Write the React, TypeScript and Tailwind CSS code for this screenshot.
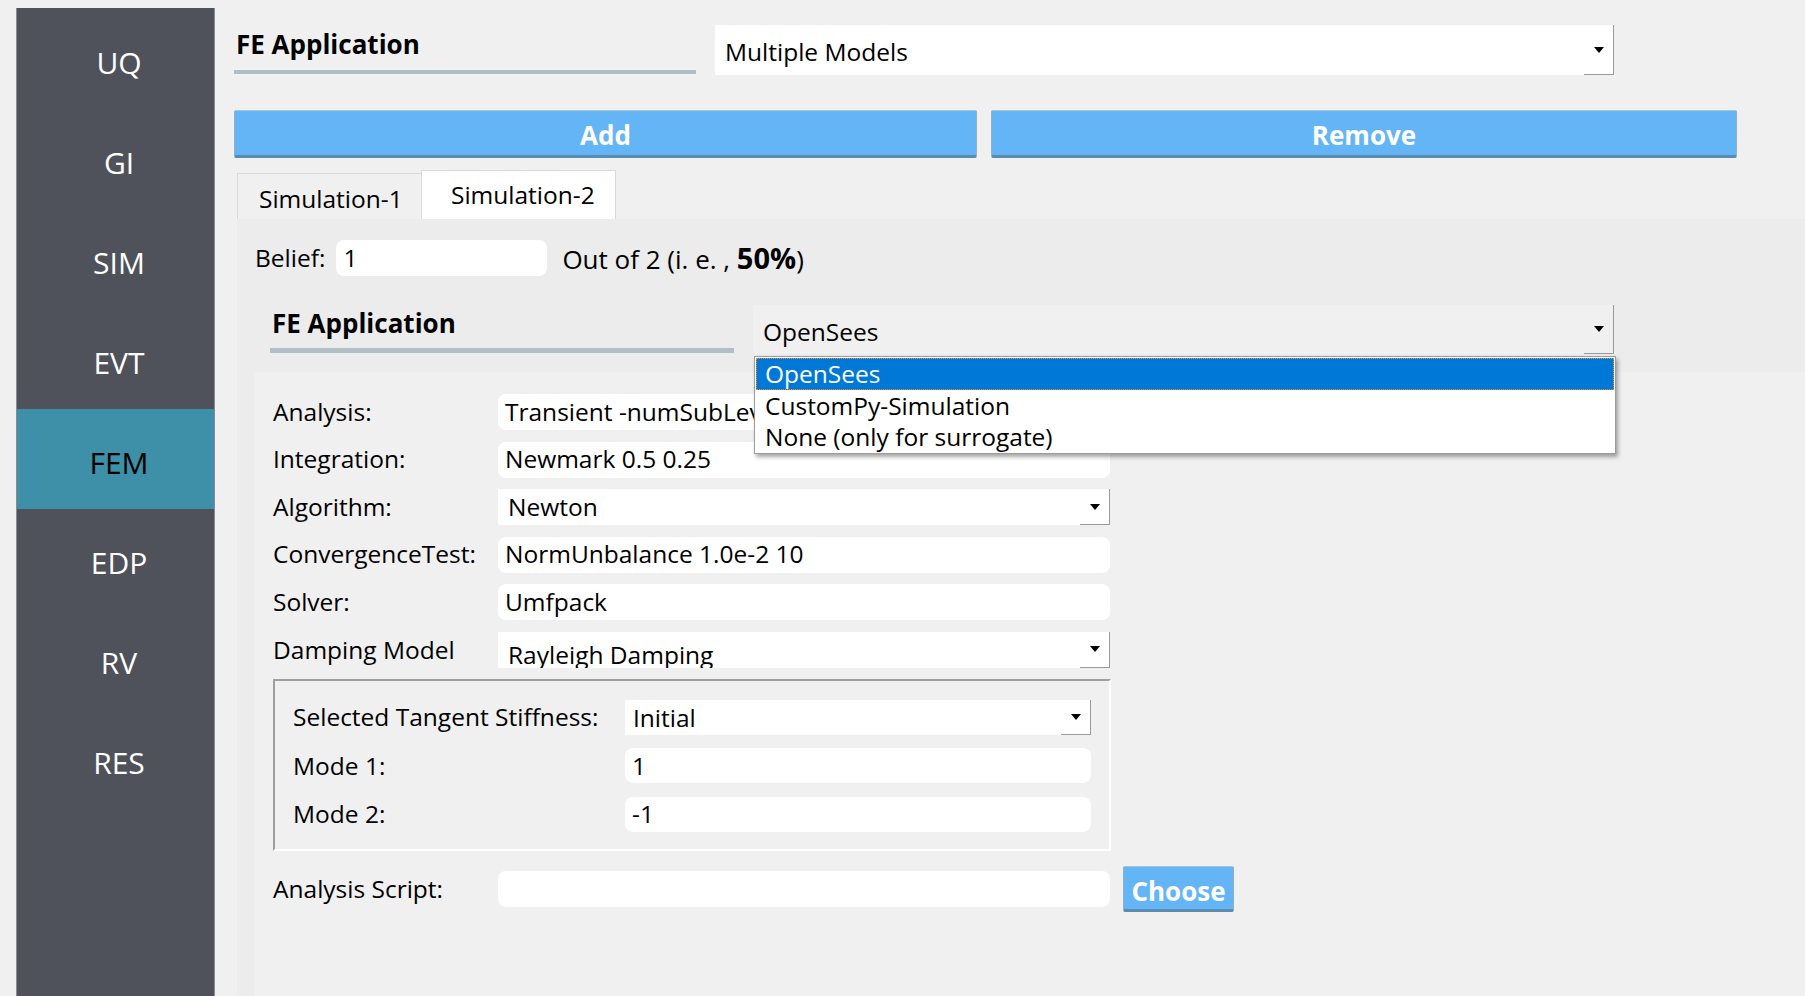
import React from 'react';

const navItems = ['UQ', 'GI', 'SIM', 'EVT', 'FEM', 'EDP', 'RV', 'RES'];

function Arrow() {
  return (
    <svg width="12" height="8" viewBox="0 0 12 8">
      <path d="M1 1 L11 1 L6 7 Z" fill="#000" />
    </svg>
  );
}

function ComboBox({ text, className, textClass }: { text: string; className: string; textClass?: string }) {
  return (
    <div className={`relative overflow-hidden flex items-center ${className}`}>
      <span className={`pl-[10px] whitespace-nowrap ${textClass ?? ''}`}>{text}</span>
      <div className="absolute right-0 top-0 bottom-0 w-[30px] border-r border-b border-[#9a9a9a] flex items-center justify-center">
        <Arrow />
      </div>
    </div>
  );
}

function TextInput({ value, className }: { value: string; className: string }) {
  return (
    <div className={`bg-white rounded-[8px] flex items-center overflow-hidden ${className}`}>
      <span className="pl-[7px] whitespace-nowrap">{value}</span>
    </div>
  );
}

function SectionLabel({ text, className, barClass }: { text: string; className: string; barClass: string }) {
  return (
    <div className={`flex flex-col ${className}`}>
      <div className="font-bold text-[26px] leading-[32px] pl-[2px]">{text}</div>
      <div className={`bg-[#b0bec5] ${barClass}`} />
    </div>
  );
}

function FormRow({ label, children }: { label: string; children: React.ReactNode }) {
  return (
    <div className="flex items-center h-[36px]">
      <div className="w-[225px] whitespace-nowrap">{label}</div>
      {children}
    </div>
  );
}

const blueButton =
  'bg-[#64b5f6] border-t border-x border-t-[#a7c3d4] border-x-[#8fb0c6] border-b-[3px] border-b-[#5a8cb0] rounded-[2px] text-white font-bold text-[26px] pt-[5px]';

export default function App() {
  return (
    <div className="relative w-[1805px] h-[996px] overflow-hidden bg-[#f0f0f0] flex font-['Open_Sans',sans-serif] text-[24.5px] text-black">
      {/* sidebar */}
      <div className="pl-[16px] pt-[8px] h-full">
        <div className="w-[199px] h-full bg-[#4f525a] border-x border-[#868b94] pt-[1px]">
          {navItems.map((item) => (
            <div
              key={item}
              className={
                item === 'FEM'
                  ? 'h-[100px] flex items-center justify-center pt-[6px] pl-[7px] bg-[#3d90a7] text-black text-[30px]'
                  : 'h-[100px] flex items-center justify-center pt-[6px] pl-[7px] text-white text-[30px]'
              }
            >
              {item}
            </div>
          ))}
        </div>
      </div>

      {/* main */}
      <div className="flex-1 flex flex-col min-w-0">
        <div className="flex pt-[25px] pl-[19px]">
          <SectionLabel text="FE Application" className="w-[462px] h-[50px] pt-[3px]" barClass="mt-[10px] h-[4px]" />
          <ComboBox text="Multiple Models" className="ml-[19px] w-[899px] h-[50px] bg-white" textClass="pt-[4px]" />
        </div>

        <div className="flex gap-[14px] pl-[19px] mt-[35px]">
          <button className={`w-[743px] h-[48px] ${blueButton}`}>Add</button>
          <button className={`w-[746px] h-[48px] ${blueButton}`}>Remove</button>
        </div>

        <div className="flex items-end pl-[22px] mt-[12px]">
          <div className="w-[184px] h-[46px] border-t border-l border-[#d9d9d9] bg-[#f0f0f0] flex items-center pl-[21px] pt-[5px]">
            Simulation-1
          </div>
          <div className="w-[195px] h-[49px] border-t border-x border-[#d9d9d9] bg-white flex items-center pl-[29px] pt-[1px]">
            Simulation-2
          </div>
        </div>

        <div className="flex-1 ml-[22px] bg-[#ececec] flex flex-col">
          <div className="flex items-center h-[36px] mt-[20px] pl-[18px] pt-[2px]">
            <span>Belief:</span>
            <TextInput value="1" className="ml-[11px] w-[211px] h-[36px]" />
            <span className="ml-[15px] whitespace-nowrap text-[26px]">
              Out of 2 (i. e. , <b className="text-[29px]">50%</b>)
            </span>
          </div>

          <div className="flex mt-[30px] pl-[33px]">
            <SectionLabel text="FE Application" className="w-[464px] h-[49px] pt-[2px]" barClass="mt-[9px] h-[5px]" />
            <ComboBox text="OpenSees" className="ml-[19px] w-[861px] h-[49px] bg-[#f0f0f0]" textClass="pt-[6px]" />
          </div>

          <div className="flex-1 ml-[17px] mt-[18px] bg-[#f0f0f0] pt-[22px] pl-[19px]">
            <div className="flex flex-col gap-[11.6px]">
              <FormRow label="Analysis:">
                <TextInput value="Transient -numSubLevels 2 -numSubSteps 10" className="w-[612px] h-[36px]" />
              </FormRow>
              <FormRow label="Integration:">
                <TextInput value="Newmark 0.5 0.25" className="w-[612px] h-[36px]" />
              </FormRow>
              <FormRow label="Algorithm:">
                <ComboBox text="Newton" className="w-[612px] h-[36px] bg-white" />
              </FormRow>
              <FormRow label="ConvergenceTest:">
                <TextInput value="NormUnbalance 1.0e-2 10" className="w-[612px] h-[36px]" />
              </FormRow>
              <FormRow label="Solver:">
                <TextInput value="Umfpack" className="w-[612px] h-[36px]" />
              </FormRow>
              <FormRow label="Damping Model">
                <ComboBox text="Rayleigh Damping" className="w-[612px] h-[36px] bg-white" textClass="pt-[10px]" />
              </FormRow>
            </div>

            <div className="mt-[11px] w-[838px] border-2 border-t-[#a0a0a0] border-l-[#a0a0a0] border-b-white border-r-white pt-[19px] pb-[17px] pl-[18px]">
              <div className="flex flex-col gap-[13.5px]">
                <div className="flex items-center h-[35px]">
                  <div className="w-[332px] whitespace-nowrap">Selected Tangent Stiffness:</div>
                  <ComboBox text="Initial" className="w-[466px] h-[35px] bg-white" textClass="-ml-[2px] pt-[2px]" />
                </div>
                <div className="flex items-center h-[35px]">
                  <div className="w-[332px]">Mode 1:</div>
                  <TextInput value="1" className="w-[466px] h-[35px]" />
                </div>
                <div className="flex items-center h-[35px]">
                  <div className="w-[332px]">Mode 2:</div>
                  <TextInput value="-1" className="w-[466px] h-[35px]" />
                </div>
              </div>
            </div>

            <div className="flex items-center h-[46px] mt-[15px]">
              <div className="w-[225px] whitespace-nowrap">Analysis Script:</div>
              <TextInput value="" className="w-[612px] h-[36px]" />
              <button className={`ml-[13px] w-[111px] h-[46px] ${blueButton} pt-[3px]`}>Choose</button>
            </div>
          </div>
        </div>
      </div>

      {/* open dropdown list */}
      <div className="absolute left-[754px] top-[356px] w-[862px] h-[98px] bg-white border border-[#9c9c9c] shadow-[2px_3px_4px_rgba(0,0,0,0.35)] p-[1px]">
        <div className="h-[32px] bg-[#0078d7] text-white border border-dotted border-[#f0902a] flex items-center pl-[8px]">
          OpenSees
        </div>
        <div className="h-[32px] flex items-center pl-[9px]">CustomPy-Simulation</div>
        <div className="h-[30px] flex items-center pl-[9px]">None (only for surrogate)</div>
      </div>
    </div>
  );
}
